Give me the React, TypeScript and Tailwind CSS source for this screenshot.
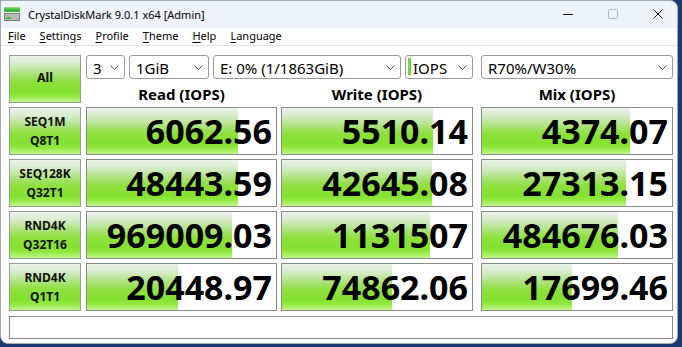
import React from "react";

type Cell = [string, number];
const rows: { l1: string; l2: string; vals: Cell[] }[] = [
  { l1: "SEQ1M", l2: "Q8T1", vals: [["6062.56", 151], ["5510.14", 151], ["4374.07", 148]] },
  { l1: "SEQ128K", l2: "Q32T1", vals: [["48443.59", 151], ["42645.08", 150], ["27313.15", 144]] },
  { l1: "RND4K", l2: "Q32T16", vals: [["969009.03", 145], ["1131507", 148], ["484676.03", 136]] },
  { l1: "RND4K", l2: "Q1T1", vals: [["20448.97", 91], ["74862.06", 110], ["17699.46", 90]] },
];

const GRAD =
  "bg-[linear-gradient(to_bottom,#eef3ec_0%,#d6ebc8_18%,#aee380_38%,#8fe040_55%,#84e22f_78%,#95ea45_88%,#c2f590_100%)]";

function Chevron() {
  return (
    <svg width="9" height="5" viewBox="0 0 9 5" className="shrink-0">
      <path d="M0.5 0.5 L4.5 4.5 L8.5 0.5" fill="none" stroke="#5a5a5a" strokeWidth="1" />
    </svg>
  );
}

function Combo({ w, text, bar }: { w: string; text: string; bar?: boolean }) {
  return (
    <div
      className={`${w} h-[24px] border border-[#9a9a9a] rounded-[3px] bg-white flex items-start pr-[5px] ${
        bar ? "pl-[2px]" : "pl-[6px]"
      }`}
    >
      {bar && <div className="w-[3px] h-[17px] bg-[#6fd63c] mt-[2px] mr-[2px] shrink-0" />}
      <span className="flex-1 text-[15px] leading-[19px] pt-[3px] text-black whitespace-nowrap overflow-hidden">
        {text}
      </span>
      <div className="self-center pt-[1px]">
        <Chevron />
      </div>
    </div>
  );
}

function ValueBox({ w, text, fill }: { w: string; text: string; fill: number }) {
  return (
    <div
      className={`${w} h-[48px] border border-[#8a8a8a] bg-white ${GRAD} bg-no-repeat flex justify-end pr-[4px]`}
      style={{ backgroundSize: `${fill}px 100%` }}
    >
      <span className="text-[34px] font-bold leading-[46px] text-black whitespace-nowrap">{text}</span>
    </div>
  );
}

function LabelBtn({ a, b }: { a: string; b: string }) {
  return (
    <div
      className={`w-[72px] h-[48px] border border-[#9a9a9a] ${GRAD} flex flex-col items-center justify-center text-[12px] font-bold leading-[19px] text-[#111]`}
    >
      <span>{a}</span>
      <span>{b}</span>
    </div>
  );
}

function Menu({ label }: { label: string }) {
  return (
    <span>
      <span className="underline underline-offset-[2px] decoration-1">{label[0]}</span>
      {label.slice(1)}
    </span>
  );
}

export default function App() {
  return (
    <div className="w-[682px] h-[347px] bg-[#1b3a72] font-['Noto_Sans','DejaVu_Sans',sans-serif] overflow-hidden">
      <div className="w-[678px] h-[344px] bg-white border border-[#a3aab4] rounded-tr-[8px] rounded-b-[8px] overflow-hidden flex flex-col">
        {/* Title bar */}
        <div className="h-[27px] bg-[#eef2f9] flex items-center shrink-0">
          <svg width="16" height="14" viewBox="0 0 16 14" className="ml-[3px] mt-[-1px]">
            <rect x="0" y="0" width="16" height="5" fill="#3fb83a" />
            <rect x="0" y="0" width="16" height="1.5" fill="#8fdc7a" />
            <rect x="0" y="6" width="16" height="8" fill="#7e7e7e" />
            <rect x="1" y="7" width="14" height="6" fill="#b9b9b9" />
            <rect x="2" y="10" width="5" height="2" fill="#3fc23a" />
          </svg>
          <span className="ml-[8px] text-[11px] leading-[15px] text-black whitespace-nowrap">
            CrystalDiskMark 9.0.1 x64 [Admin]
          </span>
          <div className="ml-auto flex items-center gap-[35px] pr-[14px] mt-[-1px]">
            <svg width="10" height="10" viewBox="0 0 10 10">
              <path d="M0 5.5 H10" stroke="#1a1a1a" strokeWidth="1" />
            </svg>
            <svg width="10" height="10" viewBox="0 0 10 10">
              <rect x="0.5" y="0.5" width="9" height="9" rx="1" fill="none" stroke="#b5b5b5" strokeWidth="1" />
            </svg>
            <svg width="10" height="10" viewBox="0 0 10 10">
              <path d="M0.5 0.5 L9.5 9.5 M9.5 0.5 L0.5 9.5" stroke="#1a1a1a" strokeWidth="1" />
            </svg>
          </div>
        </div>
        {/* Menu bar */}
        <div className="h-[17px] flex items-center gap-[14px] pl-[7px] text-[11px] leading-[15px] text-black shrink-0 pb-[2px]">
          <Menu label="File" />
          <Menu label="Settings" />
          <Menu label="Profile" />
          <Menu label="Theme" />
          <Menu label="Help" />
          <Menu label="Language" />
        </div>
        <div className="h-[1px] bg-[#e3e3e3] shrink-0" />
        {/* Body */}
        <div className="pl-[8px] pt-[9px] flex flex-col gap-[4px]">
          <div className="flex">
            <div
              className={`w-[72px] h-[48px] border border-[#9a9a9a] ${GRAD} flex items-center justify-center pb-[3px] text-[12.5px] font-bold leading-[16px] text-[#111]`}
            >
              All
            </div>
            <div className="ml-[5px] flex flex-col">
              <div className="flex h-[24px]">
                <Combo w="w-[39px]" text="3" />
                <div className="w-[4px]" />
                <Combo w="w-[80px]" text="1GiB" />
                <div className="w-[4px]" />
                <Combo w="w-[188px]" text="E: 0% (1/1863GiB)" />
                <div className="w-[4px]" />
                <Combo w="w-[68px]" text="IOPS" bar />
                <div className="w-[8px]" />
                <Combo w="w-[192px]" text="R70%/W30%" />
              </div>
              <div className="flex h-[24px] pt-[7px] text-[15px] font-bold leading-[17px] text-black">
                <div className="w-[191px] text-center whitespace-nowrap">Read (IOPS)</div>
                <div className="w-[4px]" />
                <div className="w-[192px] text-center whitespace-nowrap">Write (IOPS)</div>
                <div className="w-[8px]" />
                <div className="w-[192px] text-center whitespace-nowrap">Mix (IOPS)</div>
              </div>
            </div>
          </div>
          {rows.map((r, i) => (
            <div key={i} className="flex">
              <LabelBtn a={r.l1} b={r.l2} />
              <div className="w-[5px]" />
              <ValueBox w="w-[191px]" text={r.vals[0][0]} fill={r.vals[0][1]} />
              <div className="w-[4px]" />
              <ValueBox w="w-[192px]" text={r.vals[1][0]} fill={r.vals[1][1]} />
              <div className="w-[8px]" />
              <ValueBox w="w-[192px]" text={r.vals[2][0]} fill={r.vals[2][1]} />
            </div>
          ))}
          <div className="mt-[1px] w-[664px] h-[23px] border border-[#8a8a8a] bg-white" />
        </div>
      </div>
    </div>
  );
}
